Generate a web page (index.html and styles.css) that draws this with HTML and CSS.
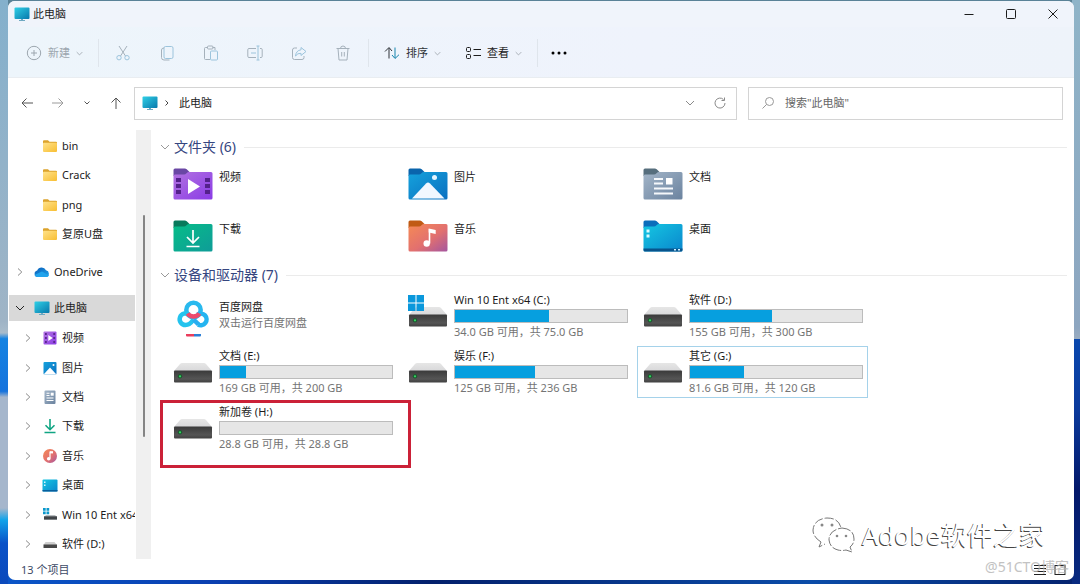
FILE: index.html
```html
<!DOCTYPE html>
<html lang="zh-CN">
<head>
<meta charset="utf-8">
<title>此电脑</title>
<link rel="stylesheet" href="styles.css">
</head>
<body>
<svg class="defs" aria-hidden="true">
  <defs>
    <linearGradient id="g-screen" x1="0" y1="0" x2="1" y2="1"><stop offset="0" stop-color="#2fd0e6"/><stop offset="1" stop-color="#0878ac"/></linearGradient>
    <linearGradient id="g-yellow" x1="0" y1="0" x2="1" y2="1"><stop offset="0" stop-color="#ffe28a"/><stop offset="1" stop-color="#f8be32"/></linearGradient>
    <linearGradient id="g-video" x1="0" y1="0" x2="1" y2="1"><stop offset="0" stop-color="#b273e0"/><stop offset="1" stop-color="#8a3be6"/></linearGradient>
    <linearGradient id="g-pic" x1="0" y1="0" x2="1" y2="1"><stop offset="0" stop-color="#15a2dc"/><stop offset="1" stop-color="#0a6fc0"/></linearGradient>
    <linearGradient id="g-doc" x1="0" y1="0" x2="1" y2="1"><stop offset="0" stop-color="#a3b5c8"/><stop offset="1" stop-color="#6b839f"/></linearGradient>
    <linearGradient id="g-down" x1="0" y1="0" x2="1" y2="1"><stop offset="0" stop-color="#06bd88"/><stop offset="1" stop-color="#0f9c98"/></linearGradient>
    <linearGradient id="g-music" x1="0" y1="0" x2="1" y2="1"><stop offset="0" stop-color="#f58a55"/><stop offset=".55" stop-color="#e2706f"/><stop offset="1" stop-color="#a5569f"/></linearGradient>
    <linearGradient id="g-desk" x1="0" y1="0" x2="1" y2="1"><stop offset="0" stop-color="#15c7e2"/><stop offset="1" stop-color="#0a86cd"/></linearGradient>
    <linearGradient id="g-drive" x1="0" y1="0" x2="0" y2="1"><stop offset="0" stop-color="#3a3a3a"/><stop offset=".7" stop-color="#555"/><stop offset="1" stop-color="#404040"/></linearGradient>
    <linearGradient id="g-lid" x1="0" y1="0" x2="0" y2="1"><stop offset="0" stop-color="#e6e6e6"/><stop offset="1" stop-color="#d8d8da"/></linearGradient>
    <linearGradient id="g-cloud" x1="0" y1="0" x2="1" y2="1"><stop offset="0" stop-color="#0a5cb8"/><stop offset="1" stop-color="#1fa4ea"/></linearGradient>
  </defs>
  <symbol id="pc" viewBox="0 0 16 16"><rect x=".5" y="1.500" width="15" height="11.500" rx="1" fill="url(#g-screen)"/><path d="M7 13h2v1.300H7zM5 14h6v1H5z" fill="#6fa9c2"/></symbol>
  <symbol id="folder" viewBox="0 0 16 16"><path d="M1 3.300q0-1 1-1h4l1.500 1.500H14q1 0 1 1V7H1z" fill="#dca32c"/><rect x="1" y="4.800" width="14" height="9.200" rx="1" fill="url(#g-yellow)"/></symbol>
  <symbol id="cloud" viewBox="0 0 16 16"><path d="M3.500 13a3.300 3.300 0 0 1-.3-6.500A4.800 4.800 0 0 1 12 6.200 3.500 3.500 0 0 1 12.400 13z" fill="url(#g-cloud)"/><path d="M3.500 13q-2 0-3-2l7.500-3.500 7 4q-1 1.500-2.600 1.500z" fill="#21a3ec"/></symbol>
  <symbol id="chev-r" viewBox="0 0 10 10"><path d="M3 1.500 6.800 5 3 8.500" class="ln"/></symbol>
  <symbol id="chev-d" viewBox="0 0 10 10"><path d="M1 3l4 4 4-4" class="ln"/></symbol>
  <symbol id="s-video" viewBox="0 0 16 16"><rect x="1.500" y="1.500" width="13" height="13" rx="1" fill="url(#g-video)"/><path d="M3 3h1.800v2H3zm0 4h1.800v2H3zm0 4h1.800v2H3zm8.300-8h1.800v2h-1.800zm0 4h1.800v2h-1.800zm0 4h1.800v2h-1.800z" fill="#5b278f"/><path d="M6.300 5v6l4.400-3z" fill="#fff"/></symbol>
  <symbol id="s-pic" viewBox="0 0 16 16"><rect x="1.500" y="2" width="13" height="12.500" rx="1" fill="url(#g-pic)"/><path d="M2 14 8 7.500 14 14q0 .5-.5.500h-11q-.5 0-.5-.5z" fill="#fff"/><circle cx="11.500" cy="5" r="1" fill="#fff"/></symbol>
  <symbol id="s-doc" viewBox="0 0 16 16"><rect x="2.500" y="1.500" width="11" height="13.500" rx="1" fill="url(#g-doc)"/><path d="M4.500 4.200h3M4.500 6.500h3M4.500 9h7M4.500 11.500h7" stroke="#fff" stroke-width="1.100"/><path d="M8.700 3.700h3v3h-3z" fill="#fff"/></symbol>
  <symbol id="s-down" viewBox="0 0 16 16"><path d="M8 1v10.500M3.500 7.300 8 11.700l4.500-4.400M2.500 14.500h11" fill="none" stroke="#10a583" stroke-width="1.600"/></symbol>
  <symbol id="s-music" viewBox="0 0 16 16"><circle cx="8" cy="8" r="7" fill="url(#g-music)"/><path d="M8 3.500v7" stroke="#fff" stroke-width="1.200"/><path d="M8 3.200h3v2.200H8z" fill="#fff"/><circle cx="6.700" cy="10.700" r="1.800" fill="#fff"/></symbol>
  <symbol id="s-desk" viewBox="0 0 16 16"><rect x=".5" y="2.500" width="15" height="12" rx="1" fill="url(#g-desk)"/><path d="M2 4.500h1.500V6H2zm0 3h1.500V9H2z" fill="#d8f6ff"/><path d="M.5 13h15v1q0 .5-.5.500H1q-.5 0-.5-.5z" fill="#075f9c"/></symbol>
  <symbol id="win" viewBox="0 0 16 16"><path d="M0 0h7.500v7.500H0zM8.500 0H16v7.500H8.500zM0 8.500h7.500V16H0zM8.500 8.500H16V16H8.500z" fill="#0a98dc"/></symbol>
  <symbol id="s-win" viewBox="0 0 16 16"><path d="M1 1h2.700v2.700H1zM4.500 1h2.700v2.700H4.500zM1 4.500h2.700v2.700H1zM4.500 4.500h2.700v2.700H4.500z" fill="#0a98cc"/><path d="M4 8h9l2 2v3H2v-3z" fill="#b9bdc0"/><path d="M2 9.300h13V12.500H2z" fill="#3f4448"/></symbol>
  <symbol id="s-drive" viewBox="0 0 16 16"><path d="M3.500 6h9L15 9H1.500z" fill="#cfcfcf"/><path d="M1.500 8.500H15V12H1.500z" fill="#484848"/></symbol>
  <symbol id="drive" viewBox="0 0 40 36"><path d="M9 15h22q1 0 2 1l6 7H1l6-7q1-1 2-1z" fill="url(#g-lid)"/><rect x="1" y="22.500" width="38" height="12" rx="1" fill="url(#g-drive)"/><circle cx="7" cy="28.300" r="2.200" fill="#1d5a30"/><circle cx="7" cy="28.300" r="1.100" fill="#35d860"/></symbol>
  <symbol id="drive-sys" viewBox="0 0 40 36"><use href="#drive"/><use href="#win" width="16" height="16" y="3"/></symbol>
  <symbol id="f-video" viewBox="0 0 40 32"><path d="M.5 2q0-1.500 1.500-1.500h10q1.500 0 2.500 1.500l2 2v4H.5z" fill="#6a47a4"/><path d="M.5 8q0-1.500 1.500-1.500h9q1.500 0 2.500-1.200T16 4h22q1.500 0 1.500 1.500V30q0 1.500-1.500 1.500H2Q.5 31.500.5 30z" fill="url(#g-video)"/><path d="M3 10h5v4H3zm0 6h5v4H3zM3 22h5v4H3zM32 10h5v4h-5zm0 6h5v4h-5zm0 6h5v4h-5z" fill="#54218b"/><path d="M15 11v15l12-7.500z" fill="#fff"/></symbol>
  <symbol id="f-pic" viewBox="0 0 40 32"><path d="M.5 2q0-1.500 1.500-1.500h10q1.500 0 2.500 1.500l2 2v4H.5z" fill="#0a64ac"/><path d="M.5 8q0-1.500 1.500-1.500h9q1.500 0 2.500-1.200T16 4h22q1.500 0 1.500 1.500V30q0 1.500-1.500 1.500H2Q.5 31.500.5 30z" fill="url(#g-pic)"/><path d="M4 30.500 18 15.500q2-2 4 0l14.500 15z" fill="#f1f7ff"/><circle cx="26.500" cy="9.500" r="2.500" fill="#e3f5ff"/></symbol>
  <symbol id="f-doc" viewBox="0 0 40 32"><path d="M.5 2q0-1.500 1.500-1.500h10q1.500 0 2.500 1.500l2 2v4H.5z" fill="#566e7d"/><path d="M.5 8q0-1.500 1.500-1.500h9q1.500 0 2.500-1.200T16 4h22q1.500 0 1.500 1.500V30q0 1.500-1.500 1.500H2Q.5 31.500.5 30z" fill="url(#g-doc)"/><path d="M11 11h9M11 15.500h9M11 20.500h19M11 25.500h19" stroke="#f5f8fb" stroke-width="2"/><path d="M23 10h6.500v6.500H23z" fill="#fff"/></symbol>
  <symbol id="f-down" viewBox="0 0 40 32"><path d="M.5 2q0-1.500 1.500-1.500h10q1.500 0 2.500 1.500l2 2v4H.5z" fill="#087a5c"/><path d="M.5 8q0-1.500 1.500-1.500h9q1.500 0 2.500-1.200T16 4h22q1.500 0 1.500 1.500V30q0 1.500-1.500 1.500H2Q.5 31.500.5 30z" fill="url(#g-down)"/><path d="M20 10v12.500M14 17l6 6 6-6M13.500 26.500h13" fill="none" stroke="#fff" stroke-width="1.700"/></symbol>
  <symbol id="f-music" viewBox="0 0 40 32"><path d="M.5 2q0-1.500 1.500-1.500h10q1.500 0 2.500 1.500l2 2v4H.5z" fill="#c05a14"/><path d="M.5 8q0-1.500 1.500-1.500h9q1.500 0 2.500-1.200T16 4h22q1.500 0 1.500 1.500V30q0 1.500-1.500 1.500H2Q.5 31.500.5 30z" fill="url(#g-music)"/><path d="M21.500 9v14.500" stroke="#fff" stroke-width="1.600"/><path d="M20.700 8.500l7 1.500v4l-7-1.500z" fill="#fff"/><circle cx="18.700" cy="23.500" r="3.200" fill="#fff"/></symbol>
  <symbol id="f-desk" viewBox="0 0 40 32"><path d="M.5 2q0-1.500 1.500-1.500h10q1.500 0 2.500 1.500l2 2v4H.5z" fill="#0a6dbb"/><path d="M.5 8q0-1.500 1.500-1.500h9q1.500 0 2.500-1.200T16 4h22q1.500 0 1.500 1.500V30q0 1.500-1.500 1.500H2Q.5 31.500.5 30z" fill="url(#g-desk)"/><path d="M3.500 9.500h3v3h-3zm0 5h3v3h-3z" fill="#d9fbff"/><path d="M.5 28.500h39V30q0 1.500-1.500 1.500H2Q.5 31.500.5 30z" fill="#08548c"/><path d="M31 29h2v1.500h-2zm4 0h2v1.500h-2z" fill="#cfefff"/></symbol>
  <symbol id="baidu" viewBox="0 0 40 40"><g fill="none" stroke-width="4.500"><circle cx="20.500" cy="11" r="7.200" stroke="#29b9ee"/><path d="M20.500 20.500c-2 3-4 5.500-8 5.500a5.800 5.800 0 1 1 3.500-10.400" stroke="#24c3ee"/><path d="M24.500 15.600A5.800 5.800 0 1 1 25 25.500" stroke="#24b4f0"/><path d="M20.500 20.500l5 4.800" stroke="#28aef0"/><path d="M14.600 14.500a7.200 7.200 0 0 0 11.800 0" stroke="#ee4a6c"/></g><path d="M13 35h8v2.500h-7q-1 0-1-1z" fill="#ea3d5d"/><path d="M21 35h7v1.500q0 1-1 1h-6z" fill="#2c7fd6"/></symbol>
</svg>

<div class="window">
  <header class="titlebar">
    <svg class="i16"><use href="#pc"/></svg>
    <h1 class="title">此电脑</h1>
    <div class="caption">
      <button type="button" aria-label="最小化"><svg viewBox="0 0 12 12"><path class="ln" d="M1.500 6.500h9"/></svg></button>
      <button type="button" aria-label="最大化"><svg viewBox="0 0 12 12"><rect class="ln" x="1.500" y="1.500" width="9" height="9" rx="1"/></svg></button>
      <button type="button" aria-label="关闭"><svg viewBox="0 0 12 12"><path class="ln" d="M1.500 1.500l9 9M10.500 1.500l-9 9"/></svg></button>
    </div>
  </header>

  <div class="toolbar" role="toolbar" aria-label="命令栏">
    <button type="button" class="cmd new" disabled>
      <svg class="i16" viewBox="0 0 16 16"><circle class="ln" cx="8" cy="8" r="6.700"/><path class="ln" d="M8 5v6M5 8h6"/></svg>新建<svg class="caret"><use href="#chev-d"/></svg>
    </button>
    <span class="sep"></span>
    <div class="tools">
      <button type="button" aria-label="剪切" disabled><svg class="i16" viewBox="0 0 16 16"><path class="ln" d="M4 1l6.500 10M12 1 5.500 11"/><circle class="ln ac" cx="4" cy="12.700" r="2.200"/><circle class="ln ac" cx="12" cy="12.700" r="2.200"/></svg></button>
      <button type="button" aria-label="复制" disabled><svg class="i16" viewBox="0 0 16 16"><rect class="ln ac" x="5" y="1.500" width="9" height="12" rx="1.500"/><path class="ln" d="M5 3Q2.500 3 2.500 5v7.500q0 2.500 2.500 2.500h5.500"/></svg></button>
      <button type="button" aria-label="粘贴" disabled><svg class="i16" viewBox="0 0 16 16"><path class="ln" d="M5 2.500H2.500q-1 0-1 1v10q0 1 1 1H7M9.500 2.500h2.500V5"/><rect class="ln" x="4.500" y="1" width="5.500" height="3" rx="1"/><rect class="ln ac" x="7.500" y="6" width="7" height="9" rx="1"/></svg></button>
      <button type="button" aria-label="重命名" disabled><svg class="i16" viewBox="0 0 16 16"><path class="ln" d="M9 3.500H2q-1.200 0-1.200 1.200v6.600Q.8 12.500 2 12.500h7M13 3.500h1.200q1 0 1 1.200v6.600q0 1.200-1 1.200H13"/><path class="ln ac" d="M4 8h5M11 1v14M9.500 1h3M9.500 15h3"/></svg></button>
      <button type="button" aria-label="共享" disabled><svg class="i16" viewBox="0 0 16 16"><path class="ln" d="M6 3H3.500q-2 0-2 2v7.500q0 2 2 2H11q2 0 2-2V11"/><path class="ln ac" d="M10 2.500 15 6.500 10 10.500V8.300Q6.500 8 4.500 11 5 5.500 10 4.800z"/></svg></button>
      <button type="button" aria-label="删除" disabled><svg class="i16" viewBox="0 0 16 16"><path class="ln" d="M1.500 3.500h13M5.500 3.500q0-2.500 2.500-2.500t2.500 2.500M3 3.500 4 15h8l1-11.500M6.700 7v4.500M9.300 7v4.500"/></svg></button>
    </div>
    <span class="sep"></span>
    <button type="button" class="cmd sort"><svg class="i16" viewBox="0 0 16 16"><path class="ln" d="M5 13.500V3M1 6.500 5 2.500 8 6"/><path class="ln blue" d="M11 2.500V13M8 10l3 3.500 4-3.800"/></svg>排序<svg class="caret"><use href="#chev-d"/></svg></button>
    <button type="button" class="cmd view"><svg class="i16" viewBox="0 0 16 16"><rect class="ln" x="1.500" y="2.500" width="4" height="4" rx="1"/><rect class="ln" x="1.500" y="9.500" width="4" height="4" rx="1"/><path class="ln" d="M8.500 4.500H16M8.500 10.500H16"/></svg>查看<svg class="caret"><use href="#chev-d"/></svg></button>
    <span class="sep"></span>
    <button type="button" class="more" aria-label="更多"><svg class="i16" viewBox="0 0 16 16"><circle cx="2" cy="8" r="1.500"/><circle cx="8" cy="8" r="1.500"/><circle cx="14" cy="8" r="1.500"/></svg></button>
  </div>

  <nav class="navbar" aria-label="导航">
    <div class="history">
      <button type="button" aria-label="后退"><svg viewBox="0 0 14 14"><path class="ln" d="M13 7H2M6.500 2.500 2 7l4.500 4.500"/></svg></button>
      <button type="button" aria-label="前进" class="dim"><svg viewBox="0 0 14 14"><path class="ln" d="M1 7h11M7.500 2.500 12 7l-4.500 4.500"/></svg></button>
      <button type="button" aria-label="最近位置" class="recent"><svg viewBox="0 0 10 10"><path class="ln" d="M2.500 3.500l2.500 2.500 2.500-2.500"/></svg></button>
      <button type="button" aria-label="向上"><svg viewBox="0 0 14 14"><path class="ln" d="M7 13V2M2.500 6.500 7 2l4.500 4.500"/></svg></button>
    </div>
    <div class="address">
      <svg class="i16"><use href="#pc"/></svg>
      <svg class="crumb" viewBox="0 0 10 10"><path class="ln" d="M3.500 2.500 6 5 3.500 7.500"/></svg>
      <a href="#" class="place">此电脑</a>
      <button type="button" aria-label="展开地址"><svg viewBox="0 0 10 10"><use href="#chev-d"/></svg></button>
      <button type="button" aria-label="刷新"><svg viewBox="0 0 14 14"><path class="ln" d="M12 7A5 5 0 1 1 10.500 3.500M11.500 1.500v3h-3"/></svg></button>
    </div>
    <label class="search">
      <svg viewBox="0 0 14 14"><circle class="ln" cx="8.500" cy="5.500" r="4"/><path class="ln" d="M5.500 8.500 1.500 12.500"/></svg>
      <input type="text" placeholder="搜索&quot;此电脑&quot;" aria-label="搜索此电脑">
    </label>
  </nav>

  <div class="body">
    <aside class="side">
      <ul class="tree">
        <li class="sub"><svg class="i16"><use href="#folder"/></svg>bin</li>
        <li class="sub"><svg class="i16"><use href="#folder"/></svg>Crack</li>
        <li class="sub"><svg class="i16"><use href="#folder"/></svg>png</li>
        <li class="sub"><svg class="i16"><use href="#folder"/></svg>复原U盘</li>
        <li class="root"><svg class="tw"><use href="#chev-r"/></svg><svg class="i16"><use href="#cloud"/></svg>OneDrive</li>
        <li class="root current"><svg class="tw"><use href="#chev-d"/></svg><svg class="i16"><use href="#pc"/></svg>此电脑</li>
        <li class="kid"><svg class="tw"><use href="#chev-r"/></svg><svg class="i16"><use href="#s-video"/></svg>视频</li>
        <li class="kid"><svg class="tw"><use href="#chev-r"/></svg><svg class="i16"><use href="#s-pic"/></svg>图片</li>
        <li class="kid"><svg class="tw"><use href="#chev-r"/></svg><svg class="i16"><use href="#s-doc"/></svg>文档</li>
        <li class="kid"><svg class="tw"><use href="#chev-r"/></svg><svg class="i16"><use href="#s-down"/></svg>下载</li>
        <li class="kid"><svg class="tw"><use href="#chev-r"/></svg><svg class="i16"><use href="#s-music"/></svg>音乐</li>
        <li class="kid"><svg class="tw"><use href="#chev-r"/></svg><svg class="i16"><use href="#s-desk"/></svg>桌面</li>
        <li class="kid"><svg class="tw"><use href="#chev-r"/></svg><svg class="i16"><use href="#s-win"/></svg>Win 10 Ent x64</li>
        <li class="kid"><svg class="tw"><use href="#chev-r"/></svg><svg class="i16"><use href="#s-drive"/></svg>软件 (D:)</li>
      </ul>
      <div class="track"><div class="thumb"></div></div>
    </aside>

    <main class="content">
      <section>
        <h2 class="group"><svg><use href="#chev-d"/></svg>文件夹 (6)</h2>
        <div class="grid folders">
          <div class="tile"><svg class="ficon"><use href="#f-video"/></svg><span class="name">视频</span></div>
          <div class="tile"><svg class="ficon"><use href="#f-pic"/></svg><span class="name">图片</span></div>
          <div class="tile"><svg class="ficon"><use href="#f-doc"/></svg><span class="name">文档</span></div>
          <div class="tile"><svg class="ficon"><use href="#f-down"/></svg><span class="name">下载</span></div>
          <div class="tile"><svg class="ficon"><use href="#f-music"/></svg><span class="name">音乐</span></div>
          <div class="tile"><svg class="ficon"><use href="#f-desk"/></svg><span class="name">桌面</span></div>
        </div>
      </section>
      <section>
        <h2 class="group"><svg><use href="#chev-d"/></svg>设备和驱动器 (7)</h2>
        <div class="grid drives">
          <div class="tile app"><svg class="aicon"><use href="#baidu"/></svg><div class="info"><span class="name">百度网盘</span><span class="meta">双击运行百度网盘</span></div></div>
          <div class="tile"><svg class="dicon"><use href="#drive-sys"/></svg><div class="info"><span class="name">Win 10 Ent x64 (C:)</span><div class="bar"><div class="used" style="width:54.5%"></div></div><span class="meta">34.0 GB 可用，共 75.0 GB</span></div></div>
          <div class="tile"><svg class="dicon"><use href="#drive"/></svg><div class="info"><span class="name">软件 (D:)</span><div class="bar"><div class="used" style="width:47.5%"></div></div><span class="meta">155 GB 可用，共 300 GB</span></div></div>
          <div class="tile"><svg class="dicon"><use href="#drive"/></svg><div class="info"><span class="name">文档 (E:)</span><div class="bar"><div class="used" style="width:15%"></div></div><span class="meta">169 GB 可用，共 200 GB</span></div></div>
          <div class="tile"><svg class="dicon"><use href="#drive"/></svg><div class="info"><span class="name">娱乐 (F:)</span><div class="bar"><div class="used" style="width:46.5%"></div></div><span class="meta">125 GB 可用，共 236 GB</span></div></div>
          <div class="tile focused"><svg class="dicon"><use href="#drive"/></svg><div class="info"><span class="name">其它 (G:)</span><div class="bar"><div class="used" style="width:31.5%"></div></div><span class="meta">81.6 GB 可用，共 120 GB</span></div></div>
          <div class="tile marked"><svg class="dicon"><use href="#drive"/></svg><div class="info"><span class="name">新加卷 (H:)</span><div class="bar"><div class="used" style="width:0%"></div></div><span class="meta">28.8 GB 可用，共 28.8 GB</span></div></div>
        </div>
      </section>
    </main>
  </div>

  <footer class="status">
    <span>13 个项目</span>
    <div class="modes">
      <button type="button" aria-label="详细信息"><svg viewBox="0 0 12 12"><path class="ln" d="M0 1.500h12M0 4.500h12M0 7.500h12M0 10.500h12"/></svg></button>
      <button type="button" aria-label="大图标"><svg viewBox="0 0 12 12"><rect class="ln" x="1" y="1.500" width="10" height="9"/></svg></button>
    </div>
  </footer>

  <div class="brand">
    <svg viewBox="0 0 44 38"><g class="shade"><path d="M10 26Q2 21 2 14 3 3 16 2q12 0 14 10M10 26l-2 5 6-3"/><path d="M31 12q12 1 12 11 0 5-4 8l2 5-6-2q-4 1-8 0-8-2-9-10 0-10 13-12z"/></g><g class="eyes"><circle cx="11" cy="9" r="1.500"/><circle cx="21" cy="9" r="1.500"/><circle cx="26" cy="20" r="1.300"/><circle cx="35" cy="20" r="1.300"/></g></svg>
    <span>Adobe软件之家</span>
  </div>
  <div class="credit">@51CTO博客</div>
</div>
</body>
</html>
```

FILE: styles.css
```css
* { box-sizing: border-box; }

body {
  margin: 0;
  min-height: 100vh;
  padding: 1px 6px 4px 8px;
  display: flex;
  font: 11px/16px "Noto Sans", "Noto Sans CJK SC", sans-serif;
  color: #1c1c1c;
  background:
    linear-gradient(#8fb4c8, #8da6c0 56%, #9aacc0 58%, #0a48ae 58%, #0b3a9c 70%, #03186a 84%, #082a80) right / 8px 100% no-repeat,
    linear-gradient(#84b0cc, #9fb4c6 55%, #a9bccb 57%, #1583e2 58%, #1673dd 67%, #a5b6cc 68%, #a5b6cc 87%, #12a4ea 89%, #0a52c8 93%, #0b49bb) left / 8px 100% no-repeat,
    linear-gradient(90deg, #0b56c8, #0a3fb0 20%, #03206c 40%, #0b4ca8 75%, #04226e) bottom / 100% 12px no-repeat,
    #5a8297;
}

.defs { position: absolute; width: 0; height: 0; }

button {
  display: flex;
  align-items: center;
  justify-content: center;
  padding: 0;
  border: 0;
  background: none;
  font: inherit;
  color: inherit;
}

svg { display: block; flex: none; }
.ln { fill: none; stroke: currentColor; }
.i16 { width: 16px; height: 16px; }

.window {
  position: relative;
  flex: 1;
  min-width: 0;
  display: flex;
  flex-direction: column;
  background: #fff;
  border-radius: 7px;
  overflow: hidden;
}

.titlebar {
  display: flex;
  align-items: center;
  height: 26px;
  padding-left: 6px;
  gap: 3px;
  background: #f0f4fb;
}
.title { margin: 0; flex: 1; font-size: 11px; font-weight: 400; }
.caption { display: flex; }
.caption button { width: 42px; height: 24px; }
.caption svg { width: 12px; height: 12px; }

.toolbar {
  display: flex;
  align-items: center;
  height: 51px;
  padding: 2px 0 0 18px;
  background: linear-gradient(90deg, #edf5fb, #eff3fc 60%, #eef3fa);
  border-bottom: 1px solid #e9edf1;
}
.cmd { gap: 6px; }
.cmd:disabled { color: #9ca6ae; }
.caret { width: 7px; height: 7px; color: #8f979e; }
.sep { width: 1px; height: 28px; background: #dfe5ec; }
.new { margin-right: 15px; }
.tools { display: flex; gap: 28px; margin: 0 17px 0 16px; color: #a5b1bb; }
.tools button { color: #a5b1bb; }
.ac { stroke: #9cc4dc; }
.blue { stroke: #1584ad; }
.sort { margin: 0 24px 0 15px; color: #2f3338; }
.view { margin-right: 15px; }
.more { margin-left: 13px; }

.navbar {
  display: flex;
  align-items: center;
  gap: 11px;
  height: 52px;
  padding: 0 11px 2px 12px;
}
.history { display: flex; align-items: center; justify-content: space-between; width: 103px; color: #555; }
.history svg { width: 14px; height: 14px; }
.history .recent svg { width: 10px; height: 10px; }
.history .dim { color: #9b9b9b; }
.address, .search {
  display: flex;
  align-items: center;
  height: 33px;
  border: 1px solid #d4d4d4;
}
.address { flex: 585; padding: 0 9px 0 7px; }
.crumb { width: 10px; height: 10px; margin: 0 7px 0 4px; color: #444; }
.place { flex: 1; color: inherit; text-decoration: none; }
.address button { margin-left: 18px; color: #8a8a8a; }
.address button svg { width: 14px; height: 14px; }
.address button:first-of-type svg { width: 10px; height: 10px; }
.search { flex: 301; min-width: 0; padding-left: 12px; gap: 10px; color: #999; }
.search svg { width: 14px; height: 14px; }
.search input { flex: 1; min-width: 0; padding: 0; border: 0; outline: 0; background: none; font: inherit; color: #666; }
.search input::placeholder { color: #666; opacity: 1; }

.body { display: flex; flex: 1; }
.side { display: flex; width: 143px; }
.tree {
  display: flex;
  flex-direction: column;
  flex: 1;
  min-width: 0;
  margin: 0;
  padding: 1px 1px 0;
  list-style: none;
}
.tree li {
  display: flex;
  align-items: center;
  flex: 1;
  min-height: 26px;
  gap: 4px;
  white-space: nowrap;
  overflow: hidden;
}
.tree .sub { padding-left: 33px; }
.tree .root { margin-top: 8px; padding-left: 6px; gap: 9px; }
.tree .root .i16 { margin-right: -5px; }
.tree .kid { padding-left: 14px; gap: 9px; }
.tree .kid .i16 { margin-right: -5px; }
.tree .current { flex: none; margin: 9px 0 2px; background: #d9d9d9; }
.tw { width: 10px; height: 10px; color: #8a8a8a; }
.current .tw { color: #222; }
.track { width: 15px; padding: 85px 6px 0 7px; background: #f0f0f0; }
.thumb { width: 2px; height: 222px; border-radius: 1px; background: #858585; }

.content { flex: 1; min-width: 0; padding: 6px 7px 0 9px; }
.group {
  display: flex;
  align-items: center;
  gap: 4px;
  height: 22px;
  margin: 0;
  font-size: 14px;
  font-weight: 400;
  color: #35467f;
}
.group svg { width: 10px; height: 10px; color: #999; }
.group::after { content: ""; flex: 1; height: 1px; margin-left: 4px; background: #ebebeb; }
.grid { display: grid; grid-template-columns: repeat(auto-fill, 231px); column-gap: 4px; padding-left: 7px; }
.folders { padding-bottom: 2px; }
.drives { row-gap: 4px; padding-top: 4px; }
.tile { position: relative; display: flex; gap: 6px; height: 52px; padding: 0 4px 0 5px; border: 1px solid transparent; }
.ficon { width: 40px; height: 32px; margin-top: 9px; }
.folders .name { margin-top: 10px; }
.dicon { width: 40px; height: 36px; margin-top: 1px; }
.aicon { width: 40px; height: 40px; margin-top: 8px; }
.info { flex: 1; min-width: 0; max-width: 174px; }
.name, .meta { display: block; white-space: nowrap; }
.meta { color: #747474; }
.drives .name { padding-top: 1px; }
.drives .app .name { padding-top: 8px; }
.bar { height: 14px; margin: 1px 0; border: 1px solid #bcbcbc; background: #e6e6e6; }
.used { height: 100%; background: #069fdf; }
.focused { border-color: #a5d2ea; }
.marked::after { content: ""; position: absolute; inset: -3px -14px -15px -8px; border: 3px solid #cb2138; }

.status {
  display: flex;
  align-items: center;
  justify-content: space-between;
  height: 21px;
  padding: 0 8px 0 13px;
  color: #3c4a66;
}
.modes { display: flex; gap: 8px; color: #222; }
.modes svg { width: 12px; height: 12px; }

.brand {
  position: absolute;
  right: 29px;
  bottom: 26px;
  display: flex;
  align-items: center;
  gap: 7px;
  font-size: 26px;
  line-height: 38px;
  color: #fff;
  text-shadow: -1px 1px 0 #444;
}
.brand svg { width: 44px; height: 38px; }
.shade { fill: #fff; stroke: #777; stroke-dasharray: 9 2; }
.eyes { fill: #888; }
.credit { position: absolute; right: 5px; bottom: 3px; font-size: 14px; line-height: 20px; color: #b4b4b4; opacity: .8; }
```
